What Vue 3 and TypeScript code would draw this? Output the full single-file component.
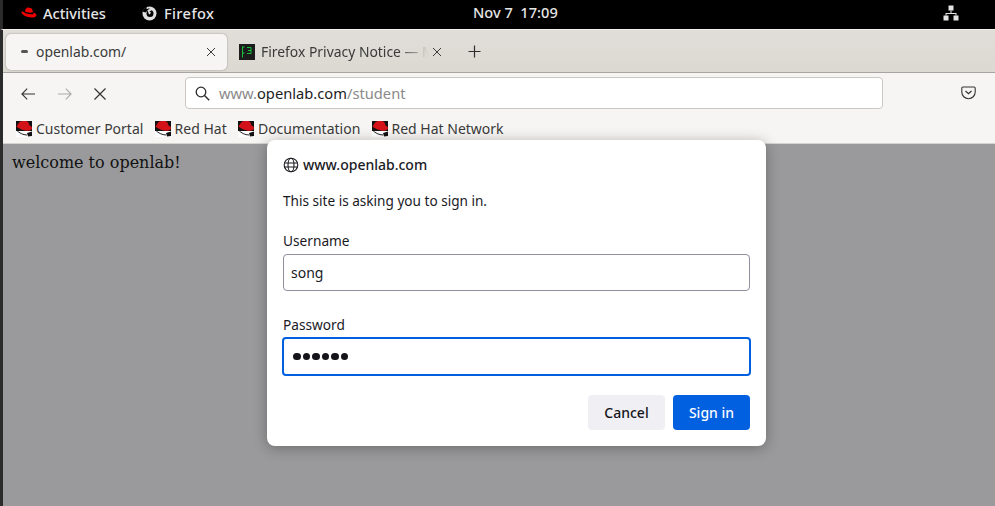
<script setup lang="ts">
const bookmarks = ["Customer Portal", "Red Hat", "Documentation", "Red Hat Network"];
</script>

<template>
  <div class="screen">
    <div class="topbar">
      <div class="top-left">
        <svg class="rh" width="16" height="12" viewBox="0 0 16 12" fill="#ee0000">
          <path d="M4 4.600C4.400 2 5.400.5 7.200.5c1 0 1.300.5 2.300.5 1.300 0 2 1.500 2.500 4.200C9.500 6 6 5.600 4 4.600z" />
          <path d="M1.800 4.500C3.500 6 7 7.300 10.500 7.300c1.500 0 2-.3 2-.9l-.2-.9c1.800.6 3.200 1.400 3.200 2.500 0 1.700-2.300 2.600-5 2.600C6 10.600.4 7.500.4 5.600c0-.6.600-1.100 1.400-1.100z" />
        </svg>
        <span class="act">Activities</span>
        <svg class="ff" width="15" height="15" viewBox="0 0 15 15">
          <circle cx="7.500" cy="7.500" r="7" fill="#e0e0e0" />
          <path d="M.5 5.500C1.500 3 3 1.500 5 1c-.5.8-.6 1.500-.4 2.200C5.500 2.600 7 2.400 8 2.800 6.800 3 6 3.700 5.800 4.600L3.500 6.500z" fill="#000" />
          <circle cx="8" cy="7.500" r="3.500" fill="#000" />
          <path d="M5.500 4.300C7 3.500 9 4 10 5.300c-1-.5-2.300-.5-3 0 .8 0 1.800.5 1.800 1.500 0 .8-1 1.500-1.800 1.800z" fill="#e0e0e0" />
        </svg>
        <span class="app">Firefox</span>
      </div>
      <div class="clock">Nov 7&nbsp; 17:09</div>
      <svg class="net" width="16" height="16" viewBox="0 0 16 16" fill="#e4e4e4">
        <rect x="5.500" y="0.500" width="5" height="5" />
        <rect x="0.500" y="10.500" width="5" height="5" />
        <rect x="10.500" y="10.500" width="5" height="5" />
        <path d="M7.500 5.500h1V8h5v2.500h-1V9H3.500v1.500h-1V8h5z" />
      </svg>
    </div>

    <div class="browser">
      <div class="tabstrip">
        <div class="tab active">
          <span class="spinner"></span>
          <span class="tab-title">openlab.com/</span>
          <svg class="tab-x" width="10" height="10" viewBox="0 0 10 10"><path d="M1 1l8 8M9 1l-8 8" stroke="#3c3c3c" stroke-width="1" /></svg>
        </div>
        <div class="tab other">
          <svg class="term" width="16" height="16" viewBox="0 0 16 16">
            <rect width="16" height="16" fill="#1c1c1c" />
            <path d="M3.500 2.500v11M3.500 3h2M3.500 9h2" stroke="#19c23d" stroke-width="1" fill="none" />
            <path d="M8 3.500h4v3H9m3 0v3H8" stroke="#19c23d" stroke-width="1" fill="none" />
          </svg>
          <span class="tab-title fade">Firefox Privacy Notice — M</span>
          <svg class="tab-x" width="10" height="10" viewBox="0 0 10 10"><path d="M1 1l8 8M9 1l-8 8" stroke="#3c3c3c" stroke-width="1" /></svg>
        </div>
        <svg class="plus" width="13" height="13" viewBox="0 0 13 13"><path d="M6.500 .5v12M.5 6.500h12" stroke="#2e2e2e" stroke-width="1.200" /></svg>
      </div>

      <div class="toolbar">
        <svg class="nav" width="14" height="12" viewBox="0 0 14 12"><path d="M14 6H1M6.200 .7L.9 6l5.300 5.300" stroke="#333" stroke-width="1.100" fill="none" /></svg>
        <svg class="nav" width="14" height="12" viewBox="0 0 14 12"><path d="M0 6h13M7.800 .7L13.100 6l-5.300 5.300" stroke="#aaa" stroke-width="1.100" fill="none" /></svg>
        <svg class="nav" width="12" height="12" viewBox="0 0 12 12"><path d="M.5 .5l11 11M11.500 .5l-11 11" stroke="#333" stroke-width="1.200" /></svg>
        <div class="urlbar">
          <svg width="15" height="15" viewBox="0 0 15 15"><circle cx="6" cy="6" r="4.800" stroke="#2b2b2b" stroke-width="1.300" fill="none" /><path d="M9.500 9.500l4.700 4.700" stroke="#2b2b2b" stroke-width="1.400" /></svg>
          <span class="url"><span class="dim">www.</span>openlab.com<span class="dim">/student</span></span>
        </div>
        <svg class="pocket" width="15" height="14" viewBox="0 0 15 14">
          <path d="M2 1h11a1.200 1.200 0 0 1 1.200 1.200V6a6.700 6.700 0 0 1-13.400 0V2.200A1.200 1.200 0 0 1 2 1z" stroke="#333" stroke-width="1.100" fill="none" />
          <path d="M4.500 5l3 2.800L10.500 5" stroke="#333" stroke-width="1.200" fill="none" />
        </svg>
      </div>

      <div class="bookmarks">
        <div v-for="b in bookmarks" :key="b" class="bookmark">
          <svg width="16" height="16" viewBox="0 0 16 16">
            <rect width="16" height="16" fill="#fff" />
            <rect width="16" height="10" fill="#111" />
            <path d="M3.500 1C5.500-.2 9.500 0 11.500.5c1 .4 1.500 2.500 2 4 1.300.4 2.500 1.300 2.500 2.800 0 1.500-2 2.500-4 2.500-4 0-9.500-2.300-11.500-4.300C1.300 4.200 2.500 2.500 3.500 1z" fill="#d21218" />
            <path d="M1 9.500c2 2.300 6 4.500 10 4.500" stroke="#222" stroke-width="1" fill="none" />
            <path d="M11 12l5-1.500V15l-4 .5z" fill="#111" />
          </svg>
          <span>{{ b }}</span>
        </div>
      </div>

      <div class="page">
        <p class="welcome">welcome to openlab!</p>
        <div class="dialog">
          <div class="origin">
            <svg width="16" height="16" viewBox="0 0 16 16" fill="none" stroke="#1a1a1f" stroke-width="1.100">
              <circle cx="8" cy="8" r="6.800" />
              <ellipse cx="8" cy="8" rx="3" ry="6.800" />
              <path d="M1.200 6h13.600M1.200 10h13.600" />
            </svg>
            <span>www.openlab.com</span>
          </div>
          <p class="msg">This site is asking you to sign in.</p>
          <div class="label user-label">Username</div>
          <div class="field">song</div>
          <div class="label pass-label">Password</div>
          <div class="field focused">
            <span class="dots">
              <i v-for="n in 6" :key="n"></i>
            </span>
          </div>
          <div class="actions">
            <button class="btn cancel">Cancel</button>
            <button class="btn primary">Sign in</button>
          </div>
        </div>
      </div>
    </div>
  </div>
</template>

<style scoped>
.screen {
  width: 995px;
  height: 506px;
  display: flex;
  flex-direction: column;
  overflow: hidden;
  background: #000;
  font-family: "Noto Sans", sans-serif;
  position: relative;
}
.topbar {
  height: 29px;
  flex: none;
  display: flex;
  align-items: center;
  position: relative;
  color: #e6e6e6;
  font-size: 14.6px;
  font-weight: 500;
  border-left: 3px solid #2b2b2b;
  padding-bottom: 3px;
  box-sizing: border-box;
}
.top-left {
  display: flex;
  align-items: center;
  margin-left: 18px;
}
.act {
  margin-left: 6px;
}
.ff {
  margin-left: 36px;
}
.app {
  margin-left: 7px;
  letter-spacing: 0.4px;
}
.clock {
  position: absolute;
  left: 470px;
  top: 2px;
}
.net {
  position: absolute;
  left: 940px;
  top: 5px;
}
.browser {
  flex: 1;
  display: flex;
  flex-direction: column;
  border-left: 3px solid #2b2b2b;
  border-top: 1px solid #f4f2ef;
  min-height: 0;
}
.tabstrip {
  height: 43px;
  flex: none;
  display: flex;
  align-items: center;
  background: linear-gradient(#e1ded9, #dcd9d3);
  border-bottom: 1px solid #a8a5a0;
  box-sizing: border-box;
  padding: 1px 0 0 3px;
}
.tab {
  display: flex;
  align-items: center;
  font-size: 14px;
  color: #3a3a3a;
  box-sizing: border-box;
  height: 36px;
  flex: none;
}
.tab.active {
  width: 221px;
  background: #f6f5f3;
  border-radius: 5px;
  box-shadow: 0 0 2px rgba(0, 0, 0, 0.35);
  padding: 0 11px 0 15px;
}
.spinner {
  width: 7px;
  height: 3px;
  border-radius: 2px;
  background: #555;
  margin-right: 8px;
}
.tab-title {
  flex: 1;
  white-space: nowrap;
  overflow: hidden;
  font-size: 13.9px;
}
.tab-x {
  flex: none;
}
.tab.other {
  width: 216px;
  padding: 0 0 0 12px;
}
.term {
  flex: none;
  margin-right: 6px;
}
.fade {
  width: 171px;
  flex: none;
  -webkit-mask-image: linear-gradient(to right, #000 80%, transparent 98%);
  mask-image: linear-gradient(to right, #000 80%, transparent 98%);
}
.plus {
  margin-left: 25px;
}
.toolbar {
  height: 41px;
  flex: none;
  background: #f6f5f3;
  display: flex;
  align-items: center;
  position: relative;
  padding-left: 18px;
  box-sizing: border-box;
  gap: 22.5px;
}
.urlbar {
  position: absolute;
  left: 182px;
  top: 4px;
  width: 698px;
  height: 32px;
  box-sizing: border-box;
  background: #fff;
  border: 1px solid #cbc8c2;
  border-radius: 4px;
  display: flex;
  align-items: center;
  padding-left: 9px;
  gap: 9px;
  font-size: 14.7px;
  color: #1d1d1d;
}
.dim {
  color: #8a8a8a;
}
.pocket {
  position: absolute;
  left: 958px;
  top: 13px;
}
.bookmarks {
  height: 30px;
  flex: none;
  background: #f6f5f3;
  display: flex;
  align-items: center;
  padding-left: 13px;
  gap: 11.2px;
  font-size: 14px;
  color: #3a3a3a;
  box-sizing: border-box;
  border-bottom: 1px solid #d6d4cf;
}
.bookmark {
  display: flex;
  align-items: center;
  gap: 4px;
}
.page {
  flex: 1;
  background: #9a9a9c;
  position: relative;
}
.welcome {
  margin: 0;
  padding: 9px 0 0 9px;
  font-family: "DejaVu Serif", serif;
  font-size: 16px;
  color: #111;
}
.dialog {
  position: absolute;
  left: 264px;
  top: -4px;
  width: 499px;
  height: 306px;
  box-sizing: border-box;
  background: #fff;
  border-radius: 8px;
  padding: 15px 16px 16px;
  box-shadow: 0 2px 14px rgba(0, 0, 0, 0.3);
  color: #1a1a1f;
  font-size: 14px;
}
.origin {
  display: flex;
  align-items: center;
  gap: 4px;
  font-weight: 500;
  font-size: 14px;
}
.msg {
  margin: 17px 0 0;
  font-size: 13.6px;
}
.label {
  font-size: 13.7px;
}
.user-label {
  margin-top: 21px;
}
.pass-label {
  margin-top: 24px;
}
.field {
  margin-top: 4px;
  height: 37px;
  width: 467px;
  box-sizing: border-box;
  border: 1px solid #8f8f9d;
  border-radius: 4px;
  display: flex;
  align-items: center;
  padding-left: 7px;
  font-size: 14px;
}
.field.focused {
  border: 2px solid #0060df;
  margin: 3px 0 0 -1px;
  width: 469px;
  height: 39px;
  padding-left: 9px;
}
.dots {
  display: flex;
  gap: 2px;
}
.dots i {
  width: 7.5px;
  height: 7.5px;
  border-radius: 50%;
  background: #15141a;
}
.actions {
  display: flex;
  justify-content: flex-end;
  gap: 8px;
  margin-top: 19px;
}
.btn {
  width: 77px;
  height: 35px;
  border: none;
  border-radius: 4px;
  font-family: "Noto Sans", sans-serif;
  font-size: 14px;
  font-weight: 500;
}
.cancel {
  background: #f0f0f4;
  color: #15141a;
}
.primary {
  background: #0060df;
  color: #fbfbfe;
}
</style>
